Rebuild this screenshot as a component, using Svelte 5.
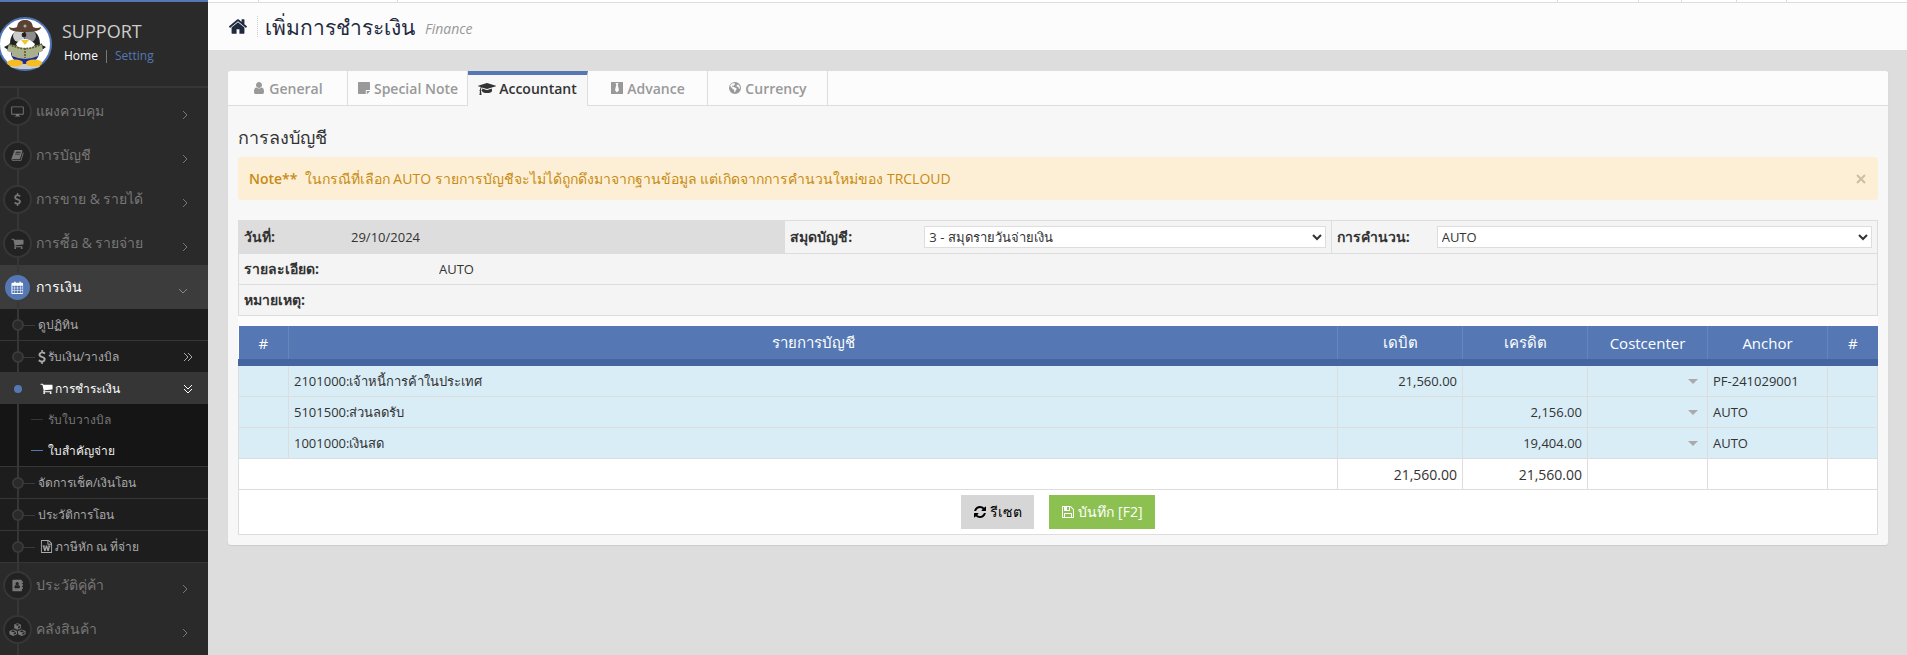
<script>
  const topSlots = [51, 139, null, 81, 43, 55, 50, 120];

  const menuTop = [
    { icon: 'desktop', label: 'แผงควบคุม' },
    { icon: 'book', label: 'การบัญชี' },
    { icon: 'dollar', label: 'การขาย & รายได้' },
    { icon: 'cart', label: 'การซื้อ & รายจ่าย' }
  ];

  const financeMenu = [
    { label: 'ดูปฏิทิน' },
    { label: 'รับเงิน/วางบิล', icon: 'dollar', more: true },
    { label: 'การชำระเงิน', icon: 'cart', more: true, children: ['รับใบวางบิล', 'ใบสำคัญจ่าย'] },
    { label: 'จัดการเช็ค/เงินโอน' },
    { label: 'ประวัติการโอน' },
    { label: 'ภาษีหัก ณ ที่จ่าย', icon: 'word' }
  ];

  const menuBottom = [
    { icon: 'contact', label: 'ประวัติคู่ค้า' },
    { icon: 'cubes', label: 'คลังสินค้า' }
  ];

  const tabs = [
    { id: 'general', label: 'General', icon: 'user' },
    { id: 'note', label: 'Special Note', icon: 'sticky' },
    { id: 'accountant', label: 'Accountant', icon: 'graduation' },
    { id: 'advance', label: 'Advance', icon: 'tie' },
    { id: 'currency', label: 'Currency', icon: 'globe' }
  ];

  let activeTab = $state('accountant');
  let showNote = $state(true);
  let selectedPage = $state('ใบสำคัญจ่าย');

  const rows = [
    { account: '2101000:เจ้าหนี้การค้าในประเทศ', debit: 21560, credit: 0, anchor: 'PF-241029001' },
    { account: '5101500:ส่วนลดรับ', debit: 0, credit: 2156, anchor: 'AUTO' },
    { account: '1001000:เงินสด', debit: 0, credit: 19404, anchor: 'AUTO' }
  ];

  const totalDebit = rows.reduce((sum, r) => sum + r.debit, 0);
  const totalCredit = rows.reduce((sum, r) => sum + r.credit, 0);

  function money(n) {
    return n ? n.toLocaleString('en-US', { minimumFractionDigits: 2 }) : '';
  }

  const icons = {
    home: 'M1472 992v480q0 26-19 45t-45 19h-384v-384h-256v384h-384q-26 0-45-19t-19-45v-480q0-1 .5-3t.5-3l575-474 575 474q1 2 1 6zm223-69l-62 74q-8 9-21 11h-3q-13 0-21-7l-692-577-692 577q-12 8-24 7-13-2-21-11l-62-74q-8-10-7-23.5t11-21.5l719-599q32-26 76-26t76 26l244 204v-195q0-14 9-23t23-9h192q14 0 23 9t9 23v408l219 182q10 8 11 21.5t-7 23.5z',
    user: 'M1536 1399q0 109-62.5 187t-150.5 78h-854q-88 0-150.5-78t-62.5-187q0-85 8.5-160.5t31.5-152 58.5-131 94-89 134.5-34.5q131 128 313 128t313-128q76 0 134.5 34.5t94 89 58.5 131 31.5 152 8.5 160.5zm-256-887q0 159-112.5 271.5t-271.5 112.5-271.5-112.5-112.5-271.5 112.5-271.5 271.5-112.5 271.5 112.5 112.5 271.5z',
    cart: 'M704 1536q0 52-38 90t-90 38-90-38-38-90 38-90 90-38 90 38 38 90zm896 0q0 52-38 90t-90 38-90-38-38-90 38-90 90-38 90 38 38 90zm128-1088v512q0 24-16.5 42.5t-40.5 21.5l-1044 122q13 60 13 70 0 16-24 64h920q26 0 45 19t19 45-19 45-45 19h-1024q-26 0-45-19t-19-45q0-11 8-31.5t16-36 21.5-40 15.5-29.5l-177-823h-204q-26 0-45-19t-19-45 19-45 45-19h256q16 0 28.5 6.5t19.5 15.5 13 24.5 8 26 5.5 29.5 4.5 26h1201q26 0 45 19t19 45z',
    refresh: 'M1639 1056q0 5-1 7-64 268-268 434.5t-478 166.5q-146 0-282.5-55t-243.5-157l-129 129q-19 19-45 19t-45-19-19-45v-448q0-26 19-45t45-19h448q26 0 45 19t19 45-19 45l-137 137q71 66 161 102t187 36q134 0 250-65t186-179q11-17 53-117 8-23 30-23h192q13 0 22.5 9.5t9.5 22.5zm25-800v448q0 26-19 45t-45 19h-448q-26 0-45-19t-19-45 19-45l138-138q-148-137-349-137-134 0-250 65t-186 179q-11 17-53 117-8 23-30 23h-199q-13 0-22.5-9.5t-9.5-22.5v-7q65-268 270-434.5t480-166.5q146 0 284 55.5t245 156.5l130-129q19-19 45-19t45 19 19 45z',
    save: 'M512 1536h768v-384h-768v384zm896 0h128v-896q0-14-10-38.5t-20-34.5l-281-281q-10-10-34-20t-39-10v416q0 40-28 68t-68 28h-576q-40 0-68-28t-28-68v-416h-128v1280h128v-416q0-40 28-68t68-28h832q40 0 68 28t28 68v416zm-384-928v-320q0-13-9.5-22.5t-22.5-9.5h-192q-13 0-22.5 9.5t-9.5 22.5v320q0 13 9.5 22.5t22.5 9.5h192q13 0 22.5-9.5t9.5-22.5zm640 32v928q0 40-28 68t-68 28h-1344q-40 0-68-28t-28-68v-1344q0-40 28-68t68-28h928q40 0 88 20t76 48l280 280q28 28 48 76t20 88z',
    book: 'M1703 478q40 57 18 129l-275 906q-19 64-76.5 107.5t-122.5 43.5h-923q-77 0-148.5-53.5t-99.5-131.5q-24-67-2-127 0-4 3-27t4-37q1-8-3-21.5t-3-19.5q2-11 8-21t16.5-23.5 16.5-23.5q23-38 45-91.5t30-91.5q3-10 .5-30t-.5-28q3-11 17-28t17-23q21-36 42-92t25-90q1-9-2.5-32t.5-28q4-13 22-30.5t22-22.5q19-26 42.5-84.5t27.5-96.5q1-8-3-25.5t-2-26.5q2-8 9-18t18-23 17-21q8-12 16.5-30.5t15-35 16-36 19.5-32 26.5-23.5 36-11.5 47.5 5.5l-1 3q38-9 51-9h761q74 0 114 56t18 130l-274 906q-36 119-71.5 153.5t-128.5 34.5h-869q-27 0-38 15-11 16-1 43 24 70 144 70h923q29 0 56-15.5t35-41.5l300-987q7-22 5-57 38 15 59 43zm-1064 2q-4 13 2 22.5t20 9.5h608q13 0 25.5-9.5t16.5-22.5l21-64q4-13-2-22.5t-20-9.5h-608q-13 0-25.5 9.5t-16.5 22.5zm-83 256q-4 13 2 22.5t20 9.5h608q13 0 25.5-9.5t16.5-22.5l21-64q4-13-2-22.5t-20-9.5h-608q-13 0-25.5 9.5t-16.5 22.5z',
    dollar: 'M1362 1185q0 153-99.5 263.5t-258.5 136.5v175q0 14-9 23t-23 9h-135q-13 0-22.5-9.5t-9.5-22.5v-175q-66-9-127.5-31t-101.5-44.5-74-48-46.5-37.5-17.5-18q-17-21-2-41l103-135q7-10 23-12 15-2 24 9l2 2q113 99 243 125 37 8 74 8 81 0 142.5-43t61.5-122q0-28-15-53t-33.5-42-58.5-37.5-66-32-80-32.5q-39-16-61.5-25t-61.5-26.5-62.5-31-56.5-35.5-53.5-42.5-43.5-49-35.5-58-21-66.5-8.5-78q0-138 98-242t255-134v-180q0-13 9.5-22.5t22.5-9.5h135q14 0 23 9t9 23v176q57 6 110.5 23t87 33.5 63.5 37.5 39 29 15 14q17 18 5 38l-81 146q-8 15-23 16-14 3-27-7-3-3-14.5-12t-39-26.5-58.5-32-74.5-26-85.5-11.5q-95 0-155 43t-60 111q0 26 8.5 48t29.5 41.5 39.5 33 56 31 60.5 27 70 27.5q53 20 81 31.5t76 35 75.5 42.5 62 50 53 63.5 31.5 76.5 13 94z',
    desktop: 'M128 192h1536q96 0 96 96v960q0 96-96 96h-560q0 80 48 160h96q32 0 32 48t-32 48H544q-32 0-32-48t32-48h96q48-80 48-160H128q-96 0-96-96V288q0-96 96-96zm32 128v896h1472V320z',
    calendar: 'M192 1664h288v-288H192zm352 0h320v-288H544zM192 1312h288V992H192zm352 0h320V992H544zM192 928h288V640H192zm736 736h320v-288H928zM544 928h320V640H544zm768 736h288v-288h-288zM928 1312h320V992H928zm384 0h288V992h-288zM928 928h320V640H928zm384 0h288V640h-288zM512 64h64q64 0 64 64v128h512V128q0-64 64-64h64q64 0 64 64v128h192q128 0 128 128v1280q0 128-128 128H192q-128 0-128-128V384q0-128 128-128h256V128q0-64 64-64z',
    sticky: 'M224 128h1344q96 0 96 96v928h-448q-96 0-96 96v416H224q-96 0-96-96V224q0-96 96-96zm1024 1152h406q-10 60-50 100l-224 224q-45 45-132 58z',
    tie: 'M128 128h1536v1536H128zm576 128l96 224-160 704 256 288 256-288-160-704 96-224z',
    globe: 'M896 128a768 768 0 1 1 0 1536 768 768 0 0 1 0-1536zM640 300c-160 40-290 160-350 300l60 200 170 60 40 160 180 60 60 200 40 180 110-90 30-180 130-130-40-160-220-60-140-120-180 20-20-110 130-60 60 80 60-120 170-120-90-120zM1200 480l-110 110 60 130 160 20 60 200 120 80 40-140c0-170-90-340-210-440z',
    contact: 'M320 96h1056q128 0 128 128v96h96q48 0 48 48v160q0 48-48 48h-96v128h96q48 0 48 48v160q0 48-48 48h-96v128h96q48 0 48 48v160q0 48-48 48h-96v224q0 128-128 128H320q-128 0-128-128V224q0-128 128-128zm528 320a224 224 0 1 0 0 448 224 224 0 0 0 0-448zM656 832q-176 40-192 352 0 96 96 96h576q96 0 96-96-16-312-192-352-192 160-384 0z',
    word: 'M1596 380q28 28 48 76t20 88v1152q0 40-28 68t-68 28H224q-40 0-68-28t-28-68V96q0-40 28-68t68-28h896q40 0 88 20t76 48zM1152 136v376h376zM1536 1664V640h-416q-40 0-68-28t-28-68V128H256v1536zM350 768h330v120h-70l80 330 110-450h192l110 450 80-330h-70V768h330v120h-66l-170 636h-186l-124-440-124 440H586L416 888h-66z'
  };
</script>

{#snippet icon(name, cls = '')}
  {#if name === 'graduation'}
    <svg class="icon wide {cls}" viewBox="0 0 2304 1792" aria-hidden="true">
      <path d="M1774 836l18 316q6 110-190 190t-450 80-450-80-190-190l18-316 574 181q22 7 48 7t48-7zm530-324q0 23-22 31l-1120 352q-4 1-10 1t-10-1L490 689q-43 34-71 111t-34 178q63 36 63 109 0 69-58 107l58 433q2 14-8 25-9 12-24 12H224q-15 0-24-12-10-11-8-25l58-433q-58-38-58-107 0-73 65-111 11-207 98-330L22 543q-22-8-22-31t22-31l1120-352q4-1 10-1t10 1l1120 352q22 8 22 31z" />
    </svg>
  {:else if name === 'cubes'}
    <svg class="icon wide {cls}" viewBox="0 0 2304 1792" aria-hidden="true">
      <path fill-rule="evenodd" d="M1152 40l460 180v500l-460 200-460-200V220zM850 270l302 120 302-120-302-120zM1220 500v270l270-120V390zM560 880l520 220v440l-520 240-520-240v-440zM240 1130l320 130 320-130-320-130zM630 1370v260l310-140v-250zM1744 880l520 220v440l-520 240-520-240v-440zM1424 1130l320 130 320-130-320-130zM1814 1370v260l310-140v-250z" />
    </svg>
  {:else}
    <svg class="icon {cls}" viewBox="0 0 1792 1792" aria-hidden="true">
      <path d={icons[name]} fill-rule="evenodd" />
    </svg>
  {/if}
{/snippet}

{#snippet parentItem(item)}
  <li>
    <a class="parent" href="#menu">
      <span class="bullet">{@render icon(item.icon)}</span>
      <span class="text">{item.label}</span>
      <svg class="arrow" viewBox="0 0 10 10" aria-hidden="true"><path d="M3 1l4 4-4 4" /></svg>
    </a>
  </li>
{/snippet}

<div class="page">
  <aside class="sidebar">
    <div class="profile">
      <svg class="avatar" viewBox="0 0 54 54" role="img" aria-label="Support">
        <circle cx="27" cy="27" r="26" fill="#fff" stroke="#4f75b8" stroke-width="2" />
        <ellipse cx="27" cy="49" rx="15" ry="3" fill="#ccc" />
        <ellipse cx="27" cy="36" rx="14" ry="11" fill="#1d2a9c" />
        <path d="M12 27c0-10 6-15 15-15s15 5 15 15l6 3-8 6H14l-8-6z" fill="#222" />
        <ellipse cx="21" cy="19" rx="6" ry="6" fill="#ccc" />
        <ellipse cx="32" cy="19" rx="6" ry="6" fill="#8c8c8c" />
        <circle cx="26" cy="18" r="2.4" fill="#222" />
        <path d="M18 27q4-5 9-5t10 5l-3 6H21z" fill="#fff" />
        <path d="M11 27l8 2q8 5 17 0l8-2 1 7-5 2v3q-13 6-26 0v-3l-5-2z" fill="#aab08a" />
        <path d="M11 27q16 9 33 0M27 31v10" fill="none" stroke="#555a33" stroke-width="1.6" stroke-dasharray="2 1" />
        <path d="M23 23h8l-4 5z" fill="#f2c42d" />
        <ellipse cx="17" cy="46" rx="8" ry="3.4" fill="#f5bd1f" />
        <ellipse cx="36" cy="46" rx="8" ry="3.4" fill="#f5bd1f" />
        <path d="M11 10q4 2 8 0c1-5 3-7 8-7s7 2 8 7q4 2 8 0c0 4-7 5-16 5s-16-1-16-5z" fill="#5a4132" />
        <circle cx="27" cy="9" r="1.5" fill="#aaa" />
      </svg>
      <div class="who">
        <strong>SUPPORT</strong>
        <nav><a href="#home" class="home">Home</a><i></i><a href="#setting" class="setting">Setting</a></nav>
      </div>
    </div>

    <ul class="menu">
      {#each menuTop as item}
        {@render parentItem(item)}
      {/each}
      <li>
        <a class="parent open" href="#menu">
          <span class="bullet">{@render icon('calendar')}</span>
          <span class="text">การเงิน</span>
          <svg class="arrow" viewBox="0 0 10 10" aria-hidden="true"><path d="M1 3l4 4 4-4" /></svg>
        </a>
        <ul class="sub">
          {#each financeMenu as item}
            <li>
              <a class="child" class:current={item.children} href="#menu">
                <span class="dot"></span>
                <span class="text">{#if item.icon}{@render icon(item.icon, item.icon === 'dollar' ? 'narrow' : 'inset')}{/if}{item.label}</span>
                {#if item.more}
                  <svg class="chevrons" viewBox="0 0 10 10" aria-hidden="true">
                    <path d={item.children ? 'M1 1l4 4 4-4M1 5l4 4 4-4' : 'M1 1l4 4-4 4M5 1l4 4-4 4'} />
                  </svg>
                {/if}
              </a>
              {#if item.children}
                <ul class="leaves">
                  {#each item.children as leaf}
                    <li>
                      <a href="#menu" class:selected={leaf === selectedPage} onclick={() => (selectedPage = leaf)}>{leaf}</a>
                    </li>
                  {/each}
                </ul>
              {/if}
            </li>
          {/each}
        </ul>
      </li>
      {#each menuBottom as item}
        {@render parentItem(item)}
      {/each}
    </ul>
  </aside>

  <main>
    <div class="topstrip">
      {#each topSlots as w}
        <span class:grow={w === null} style={w ? `width: ${w}px` : ''}></span>
      {/each}
    </div>
    <header>
      <a href="#home" class="home-link" aria-label="Home">{@render icon('home')}</a>
      <h1>เพิ่มการชำระเงิน</h1>
      <em>Finance</em>
    </header>

    <section class="panel">
      <div class="tabs" role="tablist">
        {#each tabs as tab}
          <button role="tab" aria-selected={activeTab === tab.id} class:active={activeTab === tab.id} onclick={() => (activeTab = tab.id)}>
            {@render icon(tab.icon)}{tab.label}
          </button>
        {/each}
      </div>

      <div class="content">
        <h2>การลงบัญชี</h2>
        {#if showNote}
          <div class="note">
            <p><b>Note**</b> &nbsp;ในกรณีที่เลือก AUTO รายการบัญชีจะไม่ได้ถูกดึงมาจากฐานข้อมูล แต่เกิดจากการคำนวนใหม่ของ TRCLOUD</p>
            <button aria-label="Close" onclick={() => (showNote = false)}>
              <svg viewBox="0 0 10 10" aria-hidden="true"><path d="M1 1l8 8M9 1l-8 8" /></svg>
            </button>
          </div>
        {/if}

        <div class="info">
          <div class="line first">
            <div class="cell date">
              <label for="date">วันที่:</label>
              <input id="date" value="29/10/2024" readonly />
            </div>
            <div class="cell journal">
              <label for="journal">สมุดบัญชี:</label>
              <select id="journal"><option>3 - สมุดรายวันจ่ายเงิน</option></select>
            </div>
            <div class="cell calc">
              <label for="calc">การคำนวน:</label>
              <select id="calc"><option>AUTO</option></select>
            </div>
          </div>
          <div class="line">
            <div class="cell">
              <label for="detail">รายละเอียด:</label>
              <input id="detail" value="AUTO" />
            </div>
          </div>
          <div class="line">
            <div class="cell">
              <label for="remark">หมายเหตุ:</label>
              <input id="remark" value="" />
            </div>
          </div>
        </div>

        <table>
          <colgroup>
            <col class="c-no" /><col /><col class="c-money" /><col class="c-money" /><col class="c-text" /><col class="c-text" /><col class="c-no" />
          </colgroup>
          <thead>
            <tr>
              <th>#</th>
              <th>รายการบัญชี</th>
              <th>เดบิต</th>
              <th>เครดิต</th>
              <th>Costcenter</th>
              <th>Anchor</th>
              <th>#</th>
            </tr>
          </thead>
          <tbody>
            {#each rows as row}
              <tr>
                <td></td>
                <td>{row.account}</td>
                <td class="num">{money(row.debit)}</td>
                <td class="num">{money(row.credit)}</td>
                <td class="cost">
                  <span><select aria-label="Costcenter"><option></option></select></span>
                </td>
                <td>{row.anchor}</td>
                <td></td>
              </tr>
            {/each}
          </tbody>
          <tfoot>
            <tr>
              <td colspan="2"></td>
              <td class="num">{money(totalDebit)}</td>
              <td class="num">{money(totalCredit)}</td>
              <td></td>
              <td></td>
              <td></td>
            </tr>
          </tfoot>
        </table>

        <div class="actions">
          <button class="reset">{@render icon('refresh')}รีเซต</button>
          <button class="save">{@render icon('save')}บันทึก [F2]</button>
        </div>
      </div>
    </section>
  </main>
</div>

<style>
  :global(body) {
    background: #ddd;
  }

  .page {
    display: flex;
    min-height: 100vh;
    font-family: 'Open Sans', sans-serif;
    font-size: 13px;
    color: #333;
  }

  .page :is(ul, h1, h2, p) {
    margin: 0;
    padding: 0;
    list-style: none;
  }

  .page a {
    text-decoration: none;
  }

  .page :is(button, input, select) {
    font-family: inherit;
    box-sizing: border-box;
  }

  .icon {
    width: 14px;
    height: 14px;
    fill: currentColor;
    flex: none;
  }

  .icon.wide {
    width: 18px;
  }

  /* sidebar */
  .sidebar {
    display: flex;
    flex-direction: column;
    flex: none;
    width: 208px;
    box-sizing: border-box;
    border-top: 2px solid #5578b4;
    background: #2a2a2a;
  }

  .profile {
    display: flex;
    gap: 10px;
    height: 84px;
    border-bottom: 2px solid #363636;
  }

  .avatar {
    width: 54px;
    height: 54px;
    margin: 15px 0 0 -2px;
  }

  .who {
    display: flex;
    flex-direction: column;
    padding-top: 15px;
  }

  .who strong {
    font-size: 18px;
    line-height: 28px;
    font-weight: 400;
    color: #ccc;
  }

  .who nav {
    display: flex;
    align-items: center;
    padding-left: 2px;
    font-size: 12px;
    line-height: 22px;
  }

  .who i {
    width: 1px;
    height: 13px;
    margin: 0 8px;
    background: #777;
  }

  .home {
    color: #fff;
  }

  .setting {
    color: #5578b4;
  }

  .menu {
    position: relative;
    flex: 1;
  }

  .page .menu {
    padding-top: 1px;
  }

  .menu::before {
    content: '';
    position: absolute;
    top: 0;
    bottom: 0;
    left: 17px;
    width: 2px;
    background: #363636;
    z-index: 1;
  }

  .parent {
    display: flex;
    align-items: center;
    height: 44px;
    padding: 0 18px 0 3px;
    font-size: 14px;
    color: #777;
  }

  .parent .text {
    flex: 1;
    padding-left: 4px;
  }

  .bullet {
    position: relative;
    z-index: 2;
    display: flex;
    align-items: center;
    justify-content: center;
    width: 29px;
    height: 29px;
    box-sizing: border-box;
    border: 2px solid #363636;
    border-radius: 50%;
    background: #222;
  }

  .bullet .icon {
    width: 13px;
    height: 13px;
  }

  .bullet .icon.wide {
    width: 17px;
  }

  .arrow,
  .chevrons {
    width: 10px;
    height: 10px;
    fill: none;
    stroke: currentColor;
    stroke-width: 1;
  }

  .arrow {
    margin-top: 8px;
  }

  .parent.open {
    background: #3c3c3c;
    color: #fff;
  }

  .open .bullet {
    background: #5578b4;
    border-color: #3c3c3c;
  }

  .open .arrow {
    margin-right: 2px;
    color: #888;
  }

  .sub {
    background: #1d1d1d;
  }

  .sub > li {
    border-bottom: 1px solid #363636;
  }

  .child {
    display: flex;
    align-items: center;
    height: 31px;
    padding: 0 15px 0 12px;
    font-size: 12px;
    color: #aaa;
  }

  .child .dot {
    position: relative;
    z-index: 2;
    width: 8px;
    height: 8px;
    border: 2px solid #3a3a3a;
    border-radius: 50%;
    background: #2a2a2a;
  }

  .child .dot::after {
    content: '';
    position: absolute;
    top: 4px;
    left: 10px;
    width: 11px;
    height: 1px;
    background: #3a3a3a;
  }

  .child .text {
    display: flex;
    align-items: center;
    gap: 2px;
    flex: 1;
    padding-left: 14px;
  }

  .text .icon.narrow {
    width: 14px;
    margin: 0 -3px;
  }

  .text .icon.inset {
    width: 13px;
    height: 13px;
    margin-left: 2px;
  }

  .child.current {
    background: #363636;
    color: #fff;
  }

  .child.current .dot {
    background: #5578b4;
    border-color: #363636;
  }

  .child.current .dot::after {
    display: none;
  }

  .leaves {
    background: #151515;
  }

  .leaves a {
    display: flex;
    align-items: center;
    gap: 5px;
    height: 31px;
    padding-left: 31px;
    font-size: 12px;
    color: #777;
  }

  .leaves a::before {
    content: '';
    width: 12px;
    height: 1px;
    background: #363636;
  }

  .leaves a.selected {
    color: #eee;
  }

  .leaves a.selected::before {
    background: #5578b4;
  }

  /* main column */
  main {
    flex: 1;
    min-width: 0;
  }

  .topstrip {
    display: flex;
    height: 2px;
    background: #fff;
    border-bottom: 1px solid #ddd;
  }

  .topstrip span {
    box-sizing: border-box;
    border-right: 1px solid #ddd;
  }

  .topstrip span:last-child {
    border-right: 0;
  }

  .topstrip .grow {
    flex: 1;
  }

  header {
    display: flex;
    align-items: center;
    height: 47px;
    padding-left: 20px;
    background: #fcfcfc;
    color: #1f2a3f;
  }

  .home-link {
    display: flex;
    padding-right: 9px;
    border-right: 1px dotted #ccc;
    color: #1f2a3f;
  }

  .home-link .icon {
    width: 20px;
    height: 21px;
  }

  h1 {
    font-size: 21px;
    line-height: 28px;
    font-weight: 400;
  }

  .page h1 {
    padding: 0 10px 0 7px;
  }

  header em {
    padding-top: 4px;
    font-size: 14px;
    color: #999;
  }

  .panel {
    margin: 21px 19px 20px 20px;
    border-radius: 3px;
    background: #f7f7f7;
    box-shadow: 0 1px 1px #ccc;
  }

  .tabs {
    display: flex;
    height: 35px;
    box-sizing: border-box;
    border-bottom: 1px solid #ddd;
    border-radius: 3px 3px 0 0;
    background: #fcfcfc;
  }

  .tabs button {
    display: flex;
    align-items: center;
    justify-content: center;
    gap: 3px;
    width: 120px;
    height: 35px;
    padding: 0;
    border: 0;
    border-right: 1px solid #ddd;
    border-bottom: 1px solid #ddd;
    background: none;
    font-size: 14px;
    font-weight: 600;
    color: #999;
    white-space: nowrap;
    cursor: pointer;
  }

  .tabs button.active {
    border-top: 4px solid #5578b4;
    border-bottom: 0;
    padding-bottom: 4px;
    background: #f7f7f7;
    color: #333;
  }

  .content {
    padding: 18px 10px 10px;
  }

  h2 {
    font-size: 18px;
    line-height: 26px;
    font-weight: 400;
  }

  .note {
    display: flex;
    align-items: center;
    justify-content: space-between;
    height: 43px;
    margin: 7px 0 20px;
    padding: 0 12px 0 11px;
    border-radius: 3px;
    background: #fdefd5;
    color: #c68b13;
    font-size: 14px;
  }

  .note b {
    font-weight: 600;
  }

  .note button {
    display: flex;
    padding: 0;
    border: 0;
    background: none;
    cursor: pointer;
  }

  .note svg {
    width: 10px;
    height: 10px;
    fill: none;
    stroke: #cabf9f;
    stroke-width: 2;
  }

  .info {
    border: 1px solid #ddd;
    border-bottom: 0;
    background: #f4f4f4;
  }

  .line {
    display: flex;
    height: 30px;
    border-bottom: 1px solid #ddd;
  }

  .line.first {
    height: 32px;
  }

  .cell {
    display: flex;
    align-items: center;
    flex: 1 1 0;
    min-width: 0;
    padding: 0 5px;
  }

  .cell + .cell {
    border-left: 1px solid #ddd;
  }

  .cell label {
    width: 194px;
    font-size: 14px;
    font-weight: 700;
  }

  .cell input {
    flex: 1;
    min-width: 0;
    padding: 0 1px;
    border: 0;
    background: none;
    font-size: 13px;
    color: #333;
  }

  .cell select {
    flex: 1;
    min-width: 0;
    height: 22px;
    padding: 0;
    border: 1px solid #ddd;
    background: #fff;
    font-size: 13px;
    color: #333;
  }

  .cell.date {
    background: #ddd;
  }

  .date label {
    width: 106px;
  }

  .journal label {
    width: 134px;
  }

  .calc label {
    width: 100px;
  }

  table {
    width: 100%;
    table-layout: fixed;
    border-collapse: collapse;
    border-top: 10px solid #fcfcfc;
    background: #fff;
  }

  .c-no {
    width: 50px;
  }

  .c-money {
    width: 125px;
  }

  .c-text {
    width: 120px;
  }

  th {
    height: 33px;
    padding: 0;
    border-right: 1px solid #6685bd;
    border-bottom: 7px solid #4565a0;
    background: #5578b4;
    font-size: 15px;
    font-weight: 400;
    color: #fff;
  }

  th:last-child {
    border-right: 0;
  }

  td {
    height: 30px;
    padding: 0 5px;
    border: 1px solid #ddd;
    font-size: 13px;
  }

  tbody td {
    background: #d9edf7;
  }

  .num {
    text-align: right;
  }

  tfoot td {
    font-size: 14px;
  }

  .cost span {
    display: grid;
    align-items: center;
    justify-items: end;
  }

  .cost select {
    grid-area: 1 / 1;
    width: 100%;
    border: 0;
    appearance: none;
    background: none;
  }

  .cost span::after {
    content: '';
    grid-area: 1 / 1;
    margin-right: 4px;
    border: 5px solid transparent;
    border-top-color: #aaa;
    border-bottom: 0;
    pointer-events: none;
  }

  .actions {
    display: flex;
    justify-content: center;
    gap: 15px;
    padding: 5px;
    border: 1px solid #ddd;
    border-top: 0;
    background: #fff;
  }

  .actions button {
    display: flex;
    align-items: center;
    gap: 3px;
    height: 34px;
    padding: 0 12px;
    border: 0;
    font-size: 14px;
    cursor: pointer;
  }

  .reset {
    background: #d6d6d6;
    color: #000;
  }

  .save {
    background: #8cc152;
    color: #fff;
  }
</style>
